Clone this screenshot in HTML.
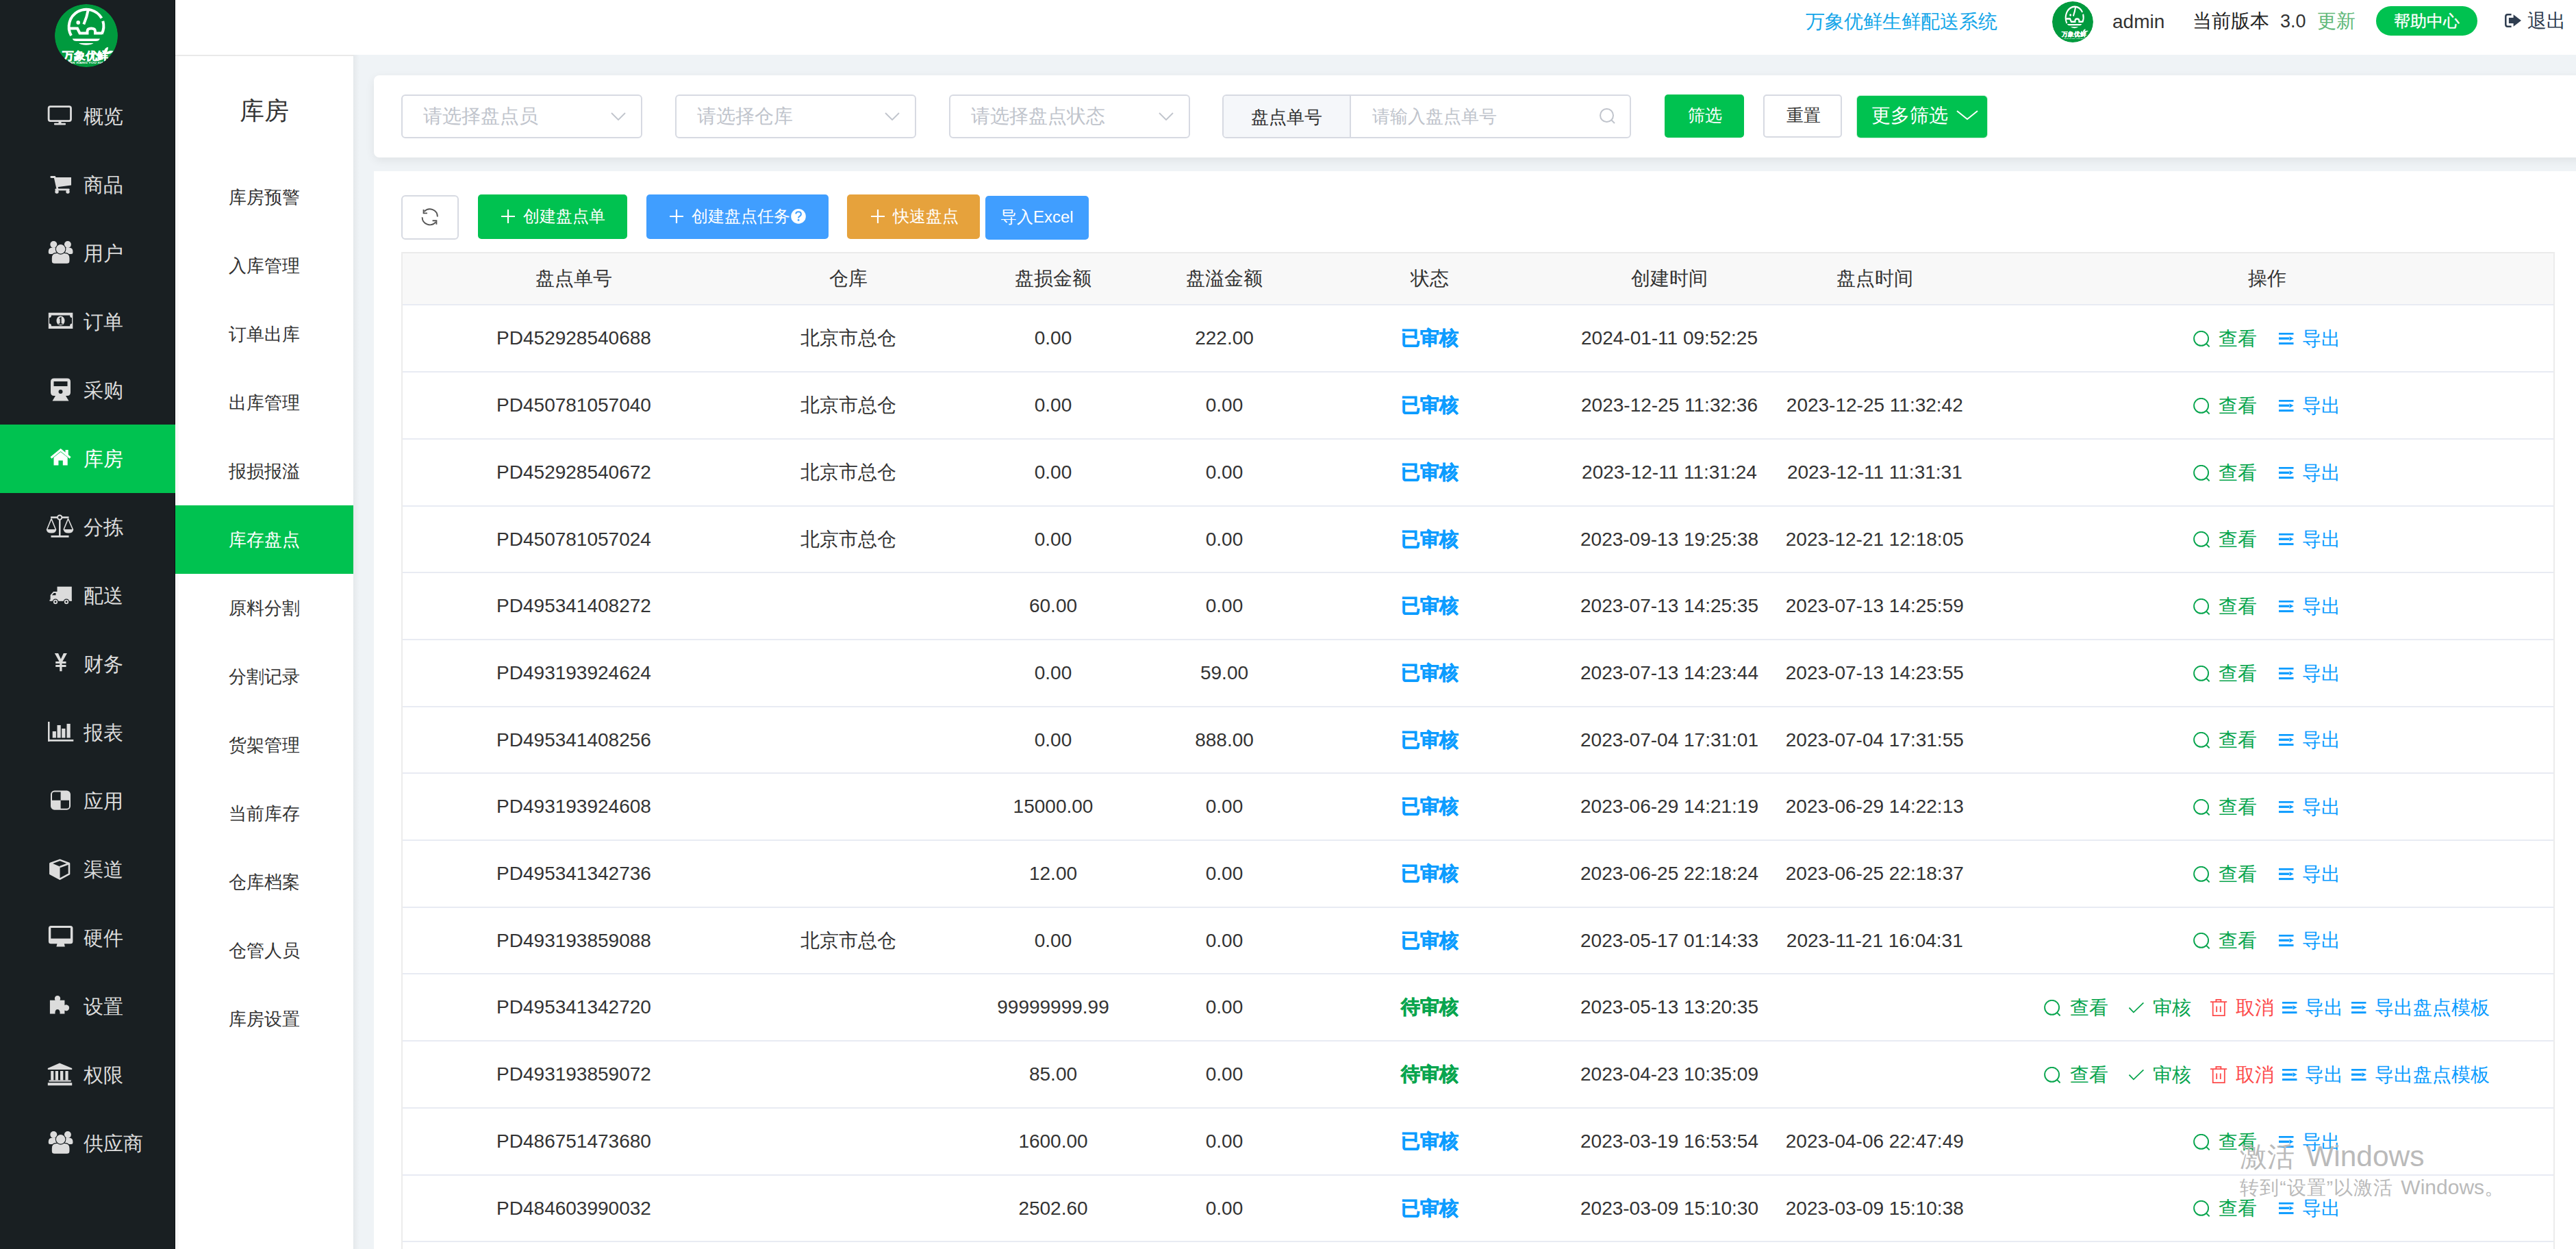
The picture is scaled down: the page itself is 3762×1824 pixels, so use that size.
<!DOCTYPE html>
<html><head><meta charset="utf-8">
<style>
*{box-sizing:border-box;margin:0;padding:0}
html,body{width:3762px;height:1824px;overflow:hidden;background:#eff3f6;font-family:"Liberation Sans",sans-serif;color:#333}
.t{position:absolute;white-space:nowrap;line-height:1}
#side{position:absolute;left:0;top:0;width:256px;height:1824px;background:#191f22;box-shadow:inset -1px 0 0 #0c1013}
.mi{position:absolute;left:0;width:256px;height:100px;color:#dcdcdc;font-size:29px}
.mi.act{background:#00c250;color:#fff}
.mt{position:absolute;left:122px;top:0;line-height:100px}
#header{position:absolute;left:256px;top:0;width:3506px;height:80px;background:#fff}
#subline{position:absolute;left:256px;top:80px;width:260px;height:2px;background:#e9e9e9}
#cshadow{position:absolute;left:516px;top:80px;width:9px;height:1744px;background:linear-gradient(to right,rgba(0,0,0,0.045),rgba(0,0,0,0))}
#sub{position:absolute;left:256px;top:82px;width:260px;height:1742px;background:#fff}
#subshadow{position:absolute;left:257px;top:82px;width:5px;height:1742px;background:linear-gradient(to right,#f5f5f5,#fff)}
#subtitle{position:absolute;left:256px;top:122px;width:260px;text-align:center;font-size:36px;color:#333;line-height:80px}
.si{position:absolute;left:256px;width:260px;height:100px;line-height:100px;text-align:center;font-size:26px;color:#333}
.si.act{background:#00c250;color:#fff}
#fcard{position:absolute;left:546px;top:110px;width:3300px;height:120px;background:#fff;border-radius:8px;box-shadow:0 4px 14px rgba(0,0,0,0.07)}
.sel{position:absolute;top:138px;height:64px;border:2px solid #d7dae2;border-radius:6px;background:#fff;font-size:28px;color:#c0c4cc;line-height:60px;padding-left:30px}
.sel svg{position:absolute;right:22px;top:24px}
#tcard{position:absolute;left:546px;top:250px;width:3216px;height:1600px;background:#fff}
.btn{position:absolute;top:284px;height:65px;border-radius:5px;color:#fff;font-size:24px;line-height:65px;text-align:center}
#table{position:absolute;left:586px;top:368px;width:3145px;height:1500px;border-left:2px solid #ececec;border-right:2px solid #ececec}
.thead{position:absolute;left:0;top:0;width:100%;height:78px;background:#f8f8f8;border-top:2px solid #ebebeb;border-bottom:2px solid #e8ebf3}
.tr{position:absolute;left:0;width:100%;height:97.7px;border-bottom:2px solid #e8ebf3}
.c{position:absolute;top:0;height:100%;display:flex;align-items:center;justify-content:center;font-size:28px;color:#333;white-space:nowrap}
.ok{color:#0c9cff;font-weight:bold;font-size:28px;-webkit-text-stroke:0.7px #0c9cff}
.wait{color:#08a54e;font-weight:bold;font-size:28px;-webkit-text-stroke:0.7px #08a54e}
.op{display:inline-flex;align-items:center;font-size:28px}
.op svg{position:relative;top:0.5px}

.g{color:#08a54e} .b{color:#0c9cff} .r{color:#fd4b4b}
</style></head><body>

<svg width="0" height="0" style="position:absolute">
<defs>
<clipPath id="lclip"><circle cx="46" cy="46" r="46"/></clipPath>
<g id="lg_ele">
<g fill="none" stroke="#fff" stroke-width="4" stroke-linecap="butt">
<path d="M24 46 A25.5 25.5 0 1 1 68.4 20.6"/>
<path d="M70.3 24.8 A25.5 25.5 0 0 1 68.6 43.6"/>
<path d="M49.2 6.5 Q47 19 42.3 29.5"/>
<path d="M22 35.5 L33 35.5 L36.5 42.4 L47.5 42.4 L47.5 40 Q47.5 35.6 53.3 35.6 Q59 35.6 59 40 L59 42.4 L69 42.4"/>
</g>
<circle cx="34.2" cy="26.9" r="2.8" fill="#fff"/>
</g>
<g id="lg_bars">
<path d="M25.8 50.4 L65.9 50.4 Q64.5 53.9 60 53.9 L31.5 53.9 Q27 53.9 25.8 50.4 Z" fill="#fff"/>
<path d="M35 57 L56.6 57 Q53 59.8 45.8 59.8 Q38.5 59.8 35 57 Z" fill="#fff"/>
</g>
<g id="lg_text">
<text x="11" y="80.5" font-family="Liberation Sans" font-weight="bold" font-size="15.5" fill="#fff" stroke="#fff" stroke-width="0.5" textLength="67" lengthAdjust="spacingAndGlyphs">万象优鲜</text>
<text x="17" y="87.4" font-family="Liberation Sans" font-weight="bold" font-size="3.6" fill="#fff" textLength="58" lengthAdjust="spacingAndGlyphs">WAN XIANG YOU XIAN</text>
</g>
<g id="lg_leaf">
<path d="M71.5 71 Q72 63.5 78 62.7 Q78 70 71.5 71 Z" fill="#fff"/>
<path d="M73 72.5 Q79 66.5 85.7 68.5 Q81 74.5 73 72.5 Z" fill="#fff"/>
</g>
<symbol id="logo" viewBox="0 0 92 92">
<g clip-path="url(#lclip)">
<circle cx="46" cy="46" r="46" fill="#009a3e"/>
<use href="#lg_ele"/><use href="#lg_bars"/><use href="#lg_text"/><use href="#lg_leaf"/>
</g>
</symbol>
<symbol id="avatar" viewBox="0 0 92 92">
<g clip-path="url(#lclip)">
<circle cx="46" cy="46" r="46" fill="#009a3e"/>
<use href="#lg_ele" transform="translate(14.05,4.3) scale(0.785,0.975)"/>
<use href="#lg_bars" transform="translate(12.5,0.2) scale(0.818,1)"/>
<use href="#lg_text" transform="translate(12.3,3.7) scale(0.827,0.93)"/>
<use href="#lg_leaf" transform="translate(8.3,18.1) scale(0.85,0.7)"/>
</g>
</symbol>
</defs>
</svg>
<div id="side">
<div class="mi" style="top:120px"><span class="mt">概览</span></div>
<div class="mi" style="top:220px"><span class="mt">商品</span></div>
<div class="mi" style="top:320px"><span class="mt">用户</span></div>
<div class="mi" style="top:420px"><span class="mt">订单</span></div>
<div class="mi" style="top:520px"><span class="mt">采购</span></div>
<div class="mi act" style="top:620px"><span class="mt">库房</span></div>
<div class="mi" style="top:720px"><span class="mt">分拣</span></div>
<div class="mi" style="top:820px"><span class="mt">配送</span></div>
<div class="mi" style="top:920px"><span class="mt">财务</span></div>
<div class="mi" style="top:1020px"><span class="mt">报表</span></div>
<div class="mi" style="top:1120px"><span class="mt">应用</span></div>
<div class="mi" style="top:1220px"><span class="mt">渠道</span></div>
<div class="mi" style="top:1320px"><span class="mt">硬件</span></div>
<div class="mi" style="top:1420px"><span class="mt">设置</span></div>
<div class="mi" style="top:1520px"><span class="mt">权限</span></div>
<div class="mi" style="top:1620px"><span class="mt">供应商</span></div>

<svg style="position:absolute;left:0;top:0" width="256" height="1824" viewBox="0 0 256 1824">
<g fill="#dcdcdc" stroke="none">
<!-- monitor outline -->
<rect x="71.1" y="155.6" width="32.4" height="21" rx="2.5" fill="none" stroke="#dcdcdc" stroke-width="2.8"/>
<rect x="85.5" y="177" width="4" height="3"/>
<rect x="79" y="179.7" width="17" height="2.8" rx="1"/>
<!-- cart -->
<g transform="translate(66,250)">
<rect x="7.4" y="7" width="7.8" height="3" rx="1.4"/>
<path d="M12.6 8.5 L15.4 8.5 L19.5 26.5 L16.6 26.5 Z"/>
<path d="M14.5 9 L38 9 L38 20.5 L17.5 23.2 Z"/>
<rect x="14.4" y="25.4" width="21.2" height="2.9" rx="1.2"/>
<circle cx="17" cy="30" r="2.7"/><circle cx="33" cy="30" r="2.7"/>
</g>
<!-- users -->
<g id="usersic">
<circle cx="78.3" cy="357.1" r="5"/><circle cx="98.9" cy="357.1" r="5"/>
<path d="M70.8 368.5 Q70.8 371 73.3 371 L84 371 L84 361.8 L76.5 361.8 Q70.8 361.8 70.8 367 Z"/>
<path d="M106.4 368.5 Q106.4 371 103.9 371 L93 371 L93 361.8 L100.7 361.8 Q106.4 361.8 106.4 367 Z"/>
<path d="M75.2 381 Q75.2 385.4 79.6 385.4 L97.6 385.4 Q102 385.4 102 381 L102 377 Q102 369.4 94.6 369.4 L82.6 369.4 Q75.2 369.4 75.2 377 Z" stroke="#191f22" stroke-width="1.1"/>
<circle cx="88.6" cy="363.8" r="7.3" stroke="#191f22" stroke-width="1.1"/>
</g>
<!-- money -->
<rect x="70.8" y="456.7" width="35.5" height="23.3"/>
<path fill="#191f22" d="M75 460.5 L102 460.5 Q102 464 105 464 L105 472.5 Q102 472.5 102 476.2 L75 476.2 Q75 472.5 72 472.5 L72 464 Q75 464 75 460.5 Z"/>
<ellipse cx="88.5" cy="468.4" rx="6" ry="6.8"/>
<path fill="#191f22" d="M86.8 464.2 L89.6 462.8 L89.6 472.4 L91.4 472.4 L91.4 474 L85.6 474 L85.6 472.4 L87.6 472.4 L87.6 465.4 L86.4 466 Z"/>
<!-- train -->
<path d="M79 552.5 L98 552.5 Q103 552.5 103 557.5 L103 573 Q103 578 98 578 L79 578 Q74 578 74 573 L74 557.5 Q74 552.5 79 552.5 Z"/>
<rect x="78.5" y="557" width="20" height="7" fill="#191f22"/>
<circle cx="88.5" cy="572" r="3" fill="#191f22"/>
<path d="M81 578 L96 578 L100.5 585.4 L76.5 585.4 Z"/>
<!-- balance -->
<rect x="74" y="754.3" width="26.5" height="2.6"/>
<circle cx="87.2" cy="755.6" r="3.2" fill="#191f22" stroke="#dcdcdc" stroke-width="2"/>
<rect x="86" y="758" width="2.5" height="24.5"/>
<rect x="74.5" y="782" width="26" height="2.8"/>
<path d="M75 757.5 L68.5 773.5 M75 757.5 L81.5 773.5 M99.5 757.5 L93 773.5 M99.5 757.5 L106.5 773.5" stroke="#dcdcdc" stroke-width="1.6" fill="none"/>
<path d="M67.7 773 L82.3 773 Q82 778.5 75 778.5 Q68 778.5 67.7 773 Z"/>
<path d="M92.6 773 L107.3 773 Q107 778.5 100 778.5 Q93 778.5 92.6 773 Z"/>
<!-- truck -->
<rect x="83.5" y="856.7" width="21.3" height="20.5"/>
<path d="M73.6 877 L73.6 869 L78 864 L84 864 L84 877 Z"/>
<path d="M75.8 869.2 L78.7 866 L81.5 866 L81.5 869.2 Z" fill="#191f22"/>
<rect x="72.5" y="875.8" width="32.3" height="2"/>
<circle cx="81" cy="879" r="3.8" stroke="#191f22" stroke-width="1.3"/><circle cx="81" cy="879" r="1.4" fill="#191f22"/>
<circle cx="97" cy="879" r="3.8" stroke="#191f22" stroke-width="1.3"/><circle cx="97" cy="879" r="1.4" fill="#191f22"/>
<!-- yen -->
<path d="M79.8 954 L85 954 L88.9 962.5 L92.8 954 L97.9 954 L91.3 966 L96.5 966 L96.5 969 L90.5 969 L90.5 971 L96.5 971 L96.5 974 L90.5 974 L90.5 980.2 L87.2 980.2 L87.2 974 L81.2 974 L81.2 971 L87.2 971 L87.2 969 L81.2 969 L81.2 966 L86.5 966 Z"/>
<!-- bar chart -->
<rect x="70" y="1054" width="2.5" height="28.7"/>
<rect x="70" y="1080" width="37.3" height="2.7"/>
<rect x="76.7" y="1068" width="5.2" height="9.5"/>
<rect x="83.5" y="1059" width="5.2" height="18.5"/>
<rect x="90.2" y="1064" width="5.2" height="13.5"/>
<rect x="97.5" y="1057" width="5.2" height="20.5"/>
<!-- quadrant -->
<rect x="75" y="1155.6" width="27" height="26.1" rx="4.5" fill="none" stroke="#dcdcdc" stroke-width="2"/>
<path d="M88.6 1156 L101 1156 Q101.5 1156 101.5 1160 L101.5 1168.8 L88.6 1168.8 Z"/>
<path d="M75.6 1168.8 L88.6 1168.8 L88.6 1181.2 L79 1181.2 Q75.6 1181.2 75.6 1178 Z"/>
<!-- cube -->
<path d="M72.2 1260.5 L87.5 1267 L87.5 1284.8 L72.2 1276.5 Z"/>
<path d="M87.5 1255.9 L101 1261 L101 1276.3 L87.5 1283.6 L73.5 1276 L73.5 1261 Z M87.5 1266 L101 1261" fill="none" stroke="#dcdcdc" stroke-width="2.6" stroke-linejoin="round"/>
<path d="M73.5 1261 L87.5 1267" stroke="#dcdcdc" stroke-width="2.6"/>
<!-- desktop -->
<rect x="70.9" y="1352" width="35.5" height="26.3" rx="3.5"/>
<rect x="74.3" y="1355" width="28.6" height="15.6" fill="#191f22"/>
<path d="M83.5 1378 L93.8 1378 L94.8 1382.4 L82.4 1382.4 Z"/>
<!-- puzzle -->
<path d="M72.9 1460.8 L80.5 1460.8 Q79.5 1458.5 80 1457 A4.2 4.2 0 0 1 88 1457 Q88.5 1458.5 87.5 1460.8 L94.4 1460.8 L94.4 1468 Q96 1467 97.8 1467.4 A4.6 4.6 0 0 1 97.8 1476.2 Q96 1476.6 94.4 1475.5 L94.4 1480.6 L87.5 1480.6 Q88 1478.5 87 1476 A3.2 3.2 0 0 0 81 1476 Q80 1478.5 80.5 1480.6 L72.9 1480.6 Z"/>
<!-- bank -->
<path d="M87 1552.5 L105.2 1560 L105.2 1562 L69.8 1562 L69.8 1560 Z"/>
<rect x="74.2" y="1564" width="4.1" height="13.5"/><rect x="80.8" y="1564" width="4.2" height="13.5"/>
<rect x="88" y="1564" width="4.3" height="13.5"/><rect x="95.4" y="1564" width="4.2" height="13.5"/>
<rect x="71.5" y="1577.5" width="32.2" height="2.1"/>
<rect x="69.8" y="1581.2" width="35.4" height="4"/>
<!-- users 2 -->
<use href="#usersic" transform="translate(0,1300)"/>
</g>
<!-- home (white) -->
<g fill="#ffffff">
<path d="M74.5 668.5 L88.6 657 L102.6 668.5" fill="none" stroke="#fff" stroke-width="3"/>
<rect x="95.5" y="657" width="4.2" height="8"/>
<path d="M78.5 668 L88.6 660 L98.7 668 L98.7 679.6 L91.8 679.6 L91.8 672.5 L85.4 672.5 L85.4 679.6 L78.5 679.6 Z"/>
</g>
</svg>
<svg style="position:absolute;left:80px;top:6px" width="92" height="92"><use href="#logo"/></svg>
</div>
<div id="header"></div><div id="subline"></div><div id="cshadow"></div>
<div class="t" style="left:2637px;top:18px;font-size:28px;color:#14a6e9">万象优鲜生鲜配送系统</div>
<svg style="position:absolute;left:2997px;top:1.5px" width="60" height="60" viewBox="0 0 92 92"><use href="#avatar"/></svg>
<div class="t" style="left:3085px;top:18px;font-size:28px;color:#333">admin</div>
<div class="t" style="left:3202px;top:17px;font-size:28px;color:#222">当前版本</div>
<div class="t" style="left:3330px;top:18px;font-size:27px;color:#333">3.0</div>
<div class="t" style="left:3384px;top:17px;font-size:28px;color:#5fb878">更新</div>
<div style="position:absolute;left:3470px;top:9px;width:148px;height:43px;border-radius:22px;background:#00c250"></div>
<div class="t" style="left:3496px;top:19px;font-size:24px;color:#fff;-webkit-text-stroke:0.3px #fff">帮助中心</div>
<svg style="position:absolute;left:3658px;top:20px" width="25" height="20" viewBox="0 0 25 20"><path d="M9.6 1.3 L4.2 1.3 Q1.3 1.3 1.3 4.3 L1.3 15.7 Q1.3 18.7 4.2 18.7 L9.6 18.7" fill="none" stroke="#2f3d50" stroke-width="2.5"/><rect x="5.9" y="5.9" width="7.4" height="8.2" fill="#2f3d50"/><path d="M12.6 1.2 L24 10 L12.6 18.8 Z" fill="#2f3d50"/></svg>
<div class="t" style="left:3691px;top:17px;font-size:28px;color:#2f3d50">退出</div>
<div id="sub"></div><div id="subshadow"></div>
<div id="subtitle">库房</div>
<div class="si" style="top:238px">库房预警</div>
<div class="si" style="top:338px">入库管理</div>
<div class="si" style="top:438px">订单出库</div>
<div class="si" style="top:538px">出库管理</div>
<div class="si" style="top:638px">报损报溢</div>
<div class="si act" style="top:738px">库存盘点</div>
<div class="si" style="top:838px">原料分割</div>
<div class="si" style="top:938px">分割记录</div>
<div class="si" style="top:1038px">货架管理</div>
<div class="si" style="top:1138px">当前库存</div>
<div class="si" style="top:1238px">仓库档案</div>
<div class="si" style="top:1338px">仓管人员</div>
<div class="si" style="top:1438px">库房设置</div>
<div id="fcard"></div>
<div class="sel" style="left:586px;width:352px">请选择盘点员<svg width="22" height="12" viewBox="0 0 22 12"><path d="M1 1 L11 11 L21 1" fill="none" stroke="#c0c4cc" stroke-width="1.8"/></svg></div>
<div class="sel" style="left:986px;width:352px">请选择仓库<svg width="22" height="12" viewBox="0 0 22 12"><path d="M1 1 L11 11 L21 1" fill="none" stroke="#c0c4cc" stroke-width="1.8"/></svg></div>
<div class="sel" style="left:1386px;width:352px">请选择盘点状态<svg width="22" height="12" viewBox="0 0 22 12"><path d="M1 1 L11 11 L21 1" fill="none" stroke="#c0c4cc" stroke-width="1.8"/></svg></div>
<div style="position:absolute;left:1785px;top:138px;width:597px;height:64px;border:2px solid #d7dae2;border-radius:6px;background:#fff;overflow:hidden">
 <div style="position:absolute;left:0;top:0;width:186px;height:60px;background:#f5f7fa;border-right:2px solid #d7dae2"></div>
</div>
<div class="t" style="left:1827px;top:158px;font-size:26px;color:#333">盘点单号</div>
<div class="t" style="left:2004px;top:157px;font-size:26px;color:#c0c4cc">请输入盘点单号</div>
<svg style="position:absolute;left:2335px;top:157px" width="25" height="25" viewBox="0 0 25 25"><circle cx="11.5" cy="11.5" r="9.5" fill="none" stroke="#c0c4cc" stroke-width="2"/><path d="M18.5 18.5 L23 23" stroke="#c0c4cc" stroke-width="2"/></svg>
<div style="position:absolute;left:2431px;top:138px;width:116px;height:63px;border-radius:5px;background:#00c250"></div>
<div class="t" style="left:2465px;top:157px;font-size:24.5px;color:#fff">筛选</div>
<div style="position:absolute;left:2575px;top:138px;width:115px;height:63px;border-radius:5px;background:#fff;border:2px solid #d7dae2"></div>
<div class="t" style="left:2609px;top:157px;font-size:24.5px;color:#333">重置</div>
<div style="position:absolute;left:2712px;top:139.5px;width:190px;height:61px;border-radius:5px;background:#00c250;box-shadow:0 0 0 1px #c8f0d6"></div>
<div class="t" style="left:2733px;top:155px;font-size:28px;color:#fff">更多筛选</div>
<svg style="position:absolute;left:2856px;top:160px" width="34" height="16" viewBox="0 0 34 16"><path d="M2 2 L17 14 L32 2" fill="none" stroke="#fff" stroke-width="2"/></svg>
<div id="tcard"></div>
<div style="position:absolute;left:586px;top:285px;width:84px;height:65px;border:2px solid #d7dae2;border-radius:6px;background:#fff"></div>
<svg style="position:absolute;left:608px;top:298px" width="40" height="38" viewBox="0 0 40 38"><g fill="none" stroke="#555" stroke-width="1.9"><path d="M11.6 10.8 A11.2 11.2 0 0 1 30.9 18.4"/><path d="M10.6 8 L10.6 13.4 L16 13.4"/><path d="M8.6 19.2 A11.2 11.2 0 0 0 28.4 26.2"/><path d="M23.6 24.3 L29.4 24.3 L29.4 29.7"/></g></svg>
<div class="btn" style="left:698px;width:218px;background:#00c250"></div>
<div class="btn" style="left:944px;width:266px;background:#409eff"></div>
<div class="btn" style="left:1237px;width:194px;background:#e6a23c"></div>
<div class="btn" style="left:1439px;width:151px;background:#409eff;top:286px;height:64px"></div>
<svg style="position:absolute;left:732px;top:306px" width="20" height="20"><path d="M10 0V20M0 10H20" stroke="#fff" stroke-width="2.2"/></svg>
<div class="t" style="left:764px;top:304px;font-size:24px;color:#fff">创建盘点单</div>
<svg style="position:absolute;left:978px;top:306px" width="20" height="20"><path d="M10 0V20M0 10H20" stroke="#fff" stroke-width="2.2"/></svg>
<div class="t" style="left:1010px;top:304px;font-size:24px;color:#fff">创建盘点任务</div>
<svg style="position:absolute;left:1154.5px;top:305px" width="22" height="22" viewBox="0 0 22 22"><circle cx="11" cy="10.9" r="10.8" fill="#fff"/><path d="M7.2 7.4 Q7.6 4.2 11 4.2 Q14.9 4.2 14.9 7.7 Q14.9 9.9 12.6 11 Q11.1 11.8 11.1 13.4" fill="none" stroke="#409eff" stroke-width="2.1"/><circle cx="11.1" cy="16.4" r="1.4" fill="#409eff"/></svg>
<svg style="position:absolute;left:1272px;top:306px" width="20" height="20"><path d="M10 0V20M0 10H20" stroke="#fff" stroke-width="2.2"/></svg>
<div class="t" style="left:1304px;top:304px;font-size:24px;color:#fff">快速盘点</div>
<div class="t" style="left:1461px;top:305px;font-size:24px;color:#fff">导入Excel</div>
<div id="table">
<div class="thead"><div class="c " style="left:110.00px;width:280px">盘点单号</div><div class="c " style="left:510.50px;width:280px">仓库</div><div class="c " style="left:810.00px;width:280px">盘损金额</div><div class="c " style="left:1060.00px;width:280px">盘溢金额</div><div class="c " style="left:1360.00px;width:280px">状态</div><div class="c " style="left:1710.00px;width:280px">创建时间</div><div class="c " style="left:2009.80px;width:280px">盘点时间</div><div class="c " style="left:2422.50px;width:600px">操作</div></div>
<div class="tr" style="top:78px;height:98px"><div class="c " style="left:110.00px;width:280px">PD452928540688</div><div class="c " style="left:510.50px;width:280px">北京市总仓</div><div class="c " style="left:810.00px;width:280px">0.00</div><div class="c " style="left:1060.00px;width:280px">222.00</div><div class="c " style="left:1360.00px;width:280px"><b class="ok">已审核</b></div><div class="c " style="left:1710.00px;width:280px">2024-01-11 09:52:25</div><div class="c " style="left:2009.80px;width:280px"></div><div class="c opsc" style="left:2422.50px;width:600px"><span class="op g" style="margin-right:31.7px"><svg width="24" height="24" viewBox="0 0 24 24"><circle cx="11.6" cy="11.3" r="10.5" fill="none" stroke="currentColor" stroke-width="1.9"/><path d="M18.6 18.4 L23.7 23.4" stroke="currentColor" stroke-width="1.9"/></svg><span style="margin-left:13px;position:relative;top:0.5px">查看</span></span><span class="op b" style="margin-right:0px"><svg width="22" height="18" viewBox="0 0 22 18"><rect x="0" y="0" width="21.5" height="2.7" fill="currentColor"/><rect x="0" y="6.6" width="15" height="3.3" fill="currentColor"/><path d="M15.5 5.2 L21.5 8.3 L15.5 11.5 Z" fill="currentColor"/><rect x="0" y="14.1" width="21.5" height="3" fill="currentColor"/></svg><span style="margin-left:11.5px;position:relative;top:0.5px">导出</span></span></div></div>
<div class="tr" style="top:176px;height:98px"><div class="c " style="left:110.00px;width:280px">PD450781057040</div><div class="c " style="left:510.50px;width:280px">北京市总仓</div><div class="c " style="left:810.00px;width:280px">0.00</div><div class="c " style="left:1060.00px;width:280px">0.00</div><div class="c " style="left:1360.00px;width:280px"><b class="ok">已审核</b></div><div class="c " style="left:1710.00px;width:280px">2023-12-25 11:32:36</div><div class="c " style="left:2009.80px;width:280px">2023-12-25 11:32:42</div><div class="c opsc" style="left:2422.50px;width:600px"><span class="op g" style="margin-right:31.7px"><svg width="24" height="24" viewBox="0 0 24 24"><circle cx="11.6" cy="11.3" r="10.5" fill="none" stroke="currentColor" stroke-width="1.9"/><path d="M18.6 18.4 L23.7 23.4" stroke="currentColor" stroke-width="1.9"/></svg><span style="margin-left:13px;position:relative;top:0.5px">查看</span></span><span class="op b" style="margin-right:0px"><svg width="22" height="18" viewBox="0 0 22 18"><rect x="0" y="0" width="21.5" height="2.7" fill="currentColor"/><rect x="0" y="6.6" width="15" height="3.3" fill="currentColor"/><path d="M15.5 5.2 L21.5 8.3 L15.5 11.5 Z" fill="currentColor"/><rect x="0" y="14.1" width="21.5" height="3" fill="currentColor"/></svg><span style="margin-left:11.5px;position:relative;top:0.5px">导出</span></span></div></div>
<div class="tr" style="top:274px;height:98px"><div class="c " style="left:110.00px;width:280px">PD452928540672</div><div class="c " style="left:510.50px;width:280px">北京市总仓</div><div class="c " style="left:810.00px;width:280px">0.00</div><div class="c " style="left:1060.00px;width:280px">0.00</div><div class="c " style="left:1360.00px;width:280px"><b class="ok">已审核</b></div><div class="c " style="left:1710.00px;width:280px">2023-12-11 11:31:24</div><div class="c " style="left:2009.80px;width:280px">2023-12-11 11:31:31</div><div class="c opsc" style="left:2422.50px;width:600px"><span class="op g" style="margin-right:31.7px"><svg width="24" height="24" viewBox="0 0 24 24"><circle cx="11.6" cy="11.3" r="10.5" fill="none" stroke="currentColor" stroke-width="1.9"/><path d="M18.6 18.4 L23.7 23.4" stroke="currentColor" stroke-width="1.9"/></svg><span style="margin-left:13px;position:relative;top:0.5px">查看</span></span><span class="op b" style="margin-right:0px"><svg width="22" height="18" viewBox="0 0 22 18"><rect x="0" y="0" width="21.5" height="2.7" fill="currentColor"/><rect x="0" y="6.6" width="15" height="3.3" fill="currentColor"/><path d="M15.5 5.2 L21.5 8.3 L15.5 11.5 Z" fill="currentColor"/><rect x="0" y="14.1" width="21.5" height="3" fill="currentColor"/></svg><span style="margin-left:11.5px;position:relative;top:0.5px">导出</span></span></div></div>
<div class="tr" style="top:372px;height:97px"><div class="c " style="left:110.00px;width:280px">PD450781057024</div><div class="c " style="left:510.50px;width:280px">北京市总仓</div><div class="c " style="left:810.00px;width:280px">0.00</div><div class="c " style="left:1060.00px;width:280px">0.00</div><div class="c " style="left:1360.00px;width:280px"><b class="ok">已审核</b></div><div class="c " style="left:1710.00px;width:280px">2023-09-13 19:25:38</div><div class="c " style="left:2009.80px;width:280px">2023-12-21 12:18:05</div><div class="c opsc" style="left:2422.50px;width:600px"><span class="op g" style="margin-right:31.7px"><svg width="24" height="24" viewBox="0 0 24 24"><circle cx="11.6" cy="11.3" r="10.5" fill="none" stroke="currentColor" stroke-width="1.9"/><path d="M18.6 18.4 L23.7 23.4" stroke="currentColor" stroke-width="1.9"/></svg><span style="margin-left:13px;position:relative;top:0.5px">查看</span></span><span class="op b" style="margin-right:0px"><svg width="22" height="18" viewBox="0 0 22 18"><rect x="0" y="0" width="21.5" height="2.7" fill="currentColor"/><rect x="0" y="6.6" width="15" height="3.3" fill="currentColor"/><path d="M15.5 5.2 L21.5 8.3 L15.5 11.5 Z" fill="currentColor"/><rect x="0" y="14.1" width="21.5" height="3" fill="currentColor"/></svg><span style="margin-left:11.5px;position:relative;top:0.5px">导出</span></span></div></div>
<div class="tr" style="top:469px;height:98px"><div class="c " style="left:110.00px;width:280px">PD495341408272</div><div class="c " style="left:510.50px;width:280px"></div><div class="c " style="left:810.00px;width:280px">60.00</div><div class="c " style="left:1060.00px;width:280px">0.00</div><div class="c " style="left:1360.00px;width:280px"><b class="ok">已审核</b></div><div class="c " style="left:1710.00px;width:280px">2023-07-13 14:25:35</div><div class="c " style="left:2009.80px;width:280px">2023-07-13 14:25:59</div><div class="c opsc" style="left:2422.50px;width:600px"><span class="op g" style="margin-right:31.7px"><svg width="24" height="24" viewBox="0 0 24 24"><circle cx="11.6" cy="11.3" r="10.5" fill="none" stroke="currentColor" stroke-width="1.9"/><path d="M18.6 18.4 L23.7 23.4" stroke="currentColor" stroke-width="1.9"/></svg><span style="margin-left:13px;position:relative;top:0.5px">查看</span></span><span class="op b" style="margin-right:0px"><svg width="22" height="18" viewBox="0 0 22 18"><rect x="0" y="0" width="21.5" height="2.7" fill="currentColor"/><rect x="0" y="6.6" width="15" height="3.3" fill="currentColor"/><path d="M15.5 5.2 L21.5 8.3 L15.5 11.5 Z" fill="currentColor"/><rect x="0" y="14.1" width="21.5" height="3" fill="currentColor"/></svg><span style="margin-left:11.5px;position:relative;top:0.5px">导出</span></span></div></div>
<div class="tr" style="top:567px;height:98px"><div class="c " style="left:110.00px;width:280px">PD493193924624</div><div class="c " style="left:510.50px;width:280px"></div><div class="c " style="left:810.00px;width:280px">0.00</div><div class="c " style="left:1060.00px;width:280px">59.00</div><div class="c " style="left:1360.00px;width:280px"><b class="ok">已审核</b></div><div class="c " style="left:1710.00px;width:280px">2023-07-13 14:23:44</div><div class="c " style="left:2009.80px;width:280px">2023-07-13 14:23:55</div><div class="c opsc" style="left:2422.50px;width:600px"><span class="op g" style="margin-right:31.7px"><svg width="24" height="24" viewBox="0 0 24 24"><circle cx="11.6" cy="11.3" r="10.5" fill="none" stroke="currentColor" stroke-width="1.9"/><path d="M18.6 18.4 L23.7 23.4" stroke="currentColor" stroke-width="1.9"/></svg><span style="margin-left:13px;position:relative;top:0.5px">查看</span></span><span class="op b" style="margin-right:0px"><svg width="22" height="18" viewBox="0 0 22 18"><rect x="0" y="0" width="21.5" height="2.7" fill="currentColor"/><rect x="0" y="6.6" width="15" height="3.3" fill="currentColor"/><path d="M15.5 5.2 L21.5 8.3 L15.5 11.5 Z" fill="currentColor"/><rect x="0" y="14.1" width="21.5" height="3" fill="currentColor"/></svg><span style="margin-left:11.5px;position:relative;top:0.5px">导出</span></span></div></div>
<div class="tr" style="top:665px;height:97px"><div class="c " style="left:110.00px;width:280px">PD495341408256</div><div class="c " style="left:510.50px;width:280px"></div><div class="c " style="left:810.00px;width:280px">0.00</div><div class="c " style="left:1060.00px;width:280px">888.00</div><div class="c " style="left:1360.00px;width:280px"><b class="ok">已审核</b></div><div class="c " style="left:1710.00px;width:280px">2023-07-04 17:31:01</div><div class="c " style="left:2009.80px;width:280px">2023-07-04 17:31:55</div><div class="c opsc" style="left:2422.50px;width:600px"><span class="op g" style="margin-right:31.7px"><svg width="24" height="24" viewBox="0 0 24 24"><circle cx="11.6" cy="11.3" r="10.5" fill="none" stroke="currentColor" stroke-width="1.9"/><path d="M18.6 18.4 L23.7 23.4" stroke="currentColor" stroke-width="1.9"/></svg><span style="margin-left:13px;position:relative;top:0.5px">查看</span></span><span class="op b" style="margin-right:0px"><svg width="22" height="18" viewBox="0 0 22 18"><rect x="0" y="0" width="21.5" height="2.7" fill="currentColor"/><rect x="0" y="6.6" width="15" height="3.3" fill="currentColor"/><path d="M15.5 5.2 L21.5 8.3 L15.5 11.5 Z" fill="currentColor"/><rect x="0" y="14.1" width="21.5" height="3" fill="currentColor"/></svg><span style="margin-left:11.5px;position:relative;top:0.5px">导出</span></span></div></div>
<div class="tr" style="top:762px;height:98px"><div class="c " style="left:110.00px;width:280px">PD493193924608</div><div class="c " style="left:510.50px;width:280px"></div><div class="c " style="left:810.00px;width:280px">15000.00</div><div class="c " style="left:1060.00px;width:280px">0.00</div><div class="c " style="left:1360.00px;width:280px"><b class="ok">已审核</b></div><div class="c " style="left:1710.00px;width:280px">2023-06-29 14:21:19</div><div class="c " style="left:2009.80px;width:280px">2023-06-29 14:22:13</div><div class="c opsc" style="left:2422.50px;width:600px"><span class="op g" style="margin-right:31.7px"><svg width="24" height="24" viewBox="0 0 24 24"><circle cx="11.6" cy="11.3" r="10.5" fill="none" stroke="currentColor" stroke-width="1.9"/><path d="M18.6 18.4 L23.7 23.4" stroke="currentColor" stroke-width="1.9"/></svg><span style="margin-left:13px;position:relative;top:0.5px">查看</span></span><span class="op b" style="margin-right:0px"><svg width="22" height="18" viewBox="0 0 22 18"><rect x="0" y="0" width="21.5" height="2.7" fill="currentColor"/><rect x="0" y="6.6" width="15" height="3.3" fill="currentColor"/><path d="M15.5 5.2 L21.5 8.3 L15.5 11.5 Z" fill="currentColor"/><rect x="0" y="14.1" width="21.5" height="3" fill="currentColor"/></svg><span style="margin-left:11.5px;position:relative;top:0.5px">导出</span></span></div></div>
<div class="tr" style="top:860px;height:98px"><div class="c " style="left:110.00px;width:280px">PD495341342736</div><div class="c " style="left:510.50px;width:280px"></div><div class="c " style="left:810.00px;width:280px">12.00</div><div class="c " style="left:1060.00px;width:280px">0.00</div><div class="c " style="left:1360.00px;width:280px"><b class="ok">已审核</b></div><div class="c " style="left:1710.00px;width:280px">2023-06-25 22:18:24</div><div class="c " style="left:2009.80px;width:280px">2023-06-25 22:18:37</div><div class="c opsc" style="left:2422.50px;width:600px"><span class="op g" style="margin-right:31.7px"><svg width="24" height="24" viewBox="0 0 24 24"><circle cx="11.6" cy="11.3" r="10.5" fill="none" stroke="currentColor" stroke-width="1.9"/><path d="M18.6 18.4 L23.7 23.4" stroke="currentColor" stroke-width="1.9"/></svg><span style="margin-left:13px;position:relative;top:0.5px">查看</span></span><span class="op b" style="margin-right:0px"><svg width="22" height="18" viewBox="0 0 22 18"><rect x="0" y="0" width="21.5" height="2.7" fill="currentColor"/><rect x="0" y="6.6" width="15" height="3.3" fill="currentColor"/><path d="M15.5 5.2 L21.5 8.3 L15.5 11.5 Z" fill="currentColor"/><rect x="0" y="14.1" width="21.5" height="3" fill="currentColor"/></svg><span style="margin-left:11.5px;position:relative;top:0.5px">导出</span></span></div></div>
<div class="tr" style="top:958px;height:97px"><div class="c " style="left:110.00px;width:280px">PD493193859088</div><div class="c " style="left:510.50px;width:280px">北京市总仓</div><div class="c " style="left:810.00px;width:280px">0.00</div><div class="c " style="left:1060.00px;width:280px">0.00</div><div class="c " style="left:1360.00px;width:280px"><b class="ok">已审核</b></div><div class="c " style="left:1710.00px;width:280px">2023-05-17 01:14:33</div><div class="c " style="left:2009.80px;width:280px">2023-11-21 16:04:31</div><div class="c opsc" style="left:2422.50px;width:600px"><span class="op g" style="margin-right:31.7px"><svg width="24" height="24" viewBox="0 0 24 24"><circle cx="11.6" cy="11.3" r="10.5" fill="none" stroke="currentColor" stroke-width="1.9"/><path d="M18.6 18.4 L23.7 23.4" stroke="currentColor" stroke-width="1.9"/></svg><span style="margin-left:13px;position:relative;top:0.5px">查看</span></span><span class="op b" style="margin-right:0px"><svg width="22" height="18" viewBox="0 0 22 18"><rect x="0" y="0" width="21.5" height="2.7" fill="currentColor"/><rect x="0" y="6.6" width="15" height="3.3" fill="currentColor"/><path d="M15.5 5.2 L21.5 8.3 L15.5 11.5 Z" fill="currentColor"/><rect x="0" y="14.1" width="21.5" height="3" fill="currentColor"/></svg><span style="margin-left:11.5px;position:relative;top:0.5px">导出</span></span></div></div>
<div class="tr" style="top:1055px;height:98px"><div class="c " style="left:110.00px;width:280px">PD495341342720</div><div class="c " style="left:510.50px;width:280px"></div><div class="c " style="left:810.00px;width:280px">99999999.99</div><div class="c " style="left:1060.00px;width:280px">0.00</div><div class="c " style="left:1360.00px;width:280px"><b class="wait">待审核</b></div><div class="c " style="left:1710.00px;width:280px">2023-05-13 13:20:35</div><div class="c " style="left:2009.80px;width:280px"></div><div class="c opsc" style="left:2422.50px;width:600px"><span class="op g" style="margin-right:30.4px"><svg width="24" height="24" viewBox="0 0 24 24"><circle cx="11.6" cy="11.3" r="10.5" fill="none" stroke="currentColor" stroke-width="1.9"/><path d="M18.6 18.4 L23.7 23.4" stroke="currentColor" stroke-width="1.9"/></svg><span style="margin-left:13.5px;position:relative;top:0.5px">查看</span></span><span class="op g" style="margin-right:28.4px"><svg width="22" height="16" viewBox="0 0 22 16"><path d="M0.5 7.6 L6.9 14.3 L21.4 0.4" fill="none" stroke="currentColor" stroke-width="1.8"/></svg><span style="margin-left:13px;position:relative;top:0.5px">审核</span></span><span class="op r" style="margin-right:11.5px"><svg width="25" height="26" viewBox="0 0 25 26"><path d="M0 4.2 H24.2 M8.4 4.2 V0.9 H15.4 V4.2 M3.7 4.2 V24.2 H20.8 V4.2 M9.2 10.5 V18.9 M14.8 10.5 V18.9" fill="none" stroke="currentColor" stroke-width="1.8"/></svg><span style="margin-left:12px;position:relative;top:0.5px">取消</span></span><span class="op b" style="margin-right:12px"><svg width="22" height="18" viewBox="0 0 22 18"><rect x="0" y="0" width="21.5" height="2.7" fill="currentColor"/><rect x="0" y="6.6" width="15" height="3.3" fill="currentColor"/><path d="M15.5 5.2 L21.5 8.3 L15.5 11.5 Z" fill="currentColor"/><rect x="0" y="14.1" width="21.5" height="3" fill="currentColor"/></svg><span style="margin-left:11.5px;position:relative;top:0.5px">导出</span></span><span class="op b" style="margin-right:0px"><svg width="22" height="18" viewBox="0 0 22 18"><rect x="0" y="0" width="21.5" height="2.7" fill="currentColor"/><rect x="0" y="6.6" width="15" height="3.3" fill="currentColor"/><path d="M15.5 5.2 L21.5 8.3 L15.5 11.5 Z" fill="currentColor"/><rect x="0" y="14.1" width="21.5" height="3" fill="currentColor"/></svg><span style="margin-left:11.5px;position:relative;top:0.5px">导出盘点模板</span></span></div></div>
<div class="tr" style="top:1153px;height:98px"><div class="c " style="left:110.00px;width:280px">PD493193859072</div><div class="c " style="left:510.50px;width:280px"></div><div class="c " style="left:810.00px;width:280px">85.00</div><div class="c " style="left:1060.00px;width:280px">0.00</div><div class="c " style="left:1360.00px;width:280px"><b class="wait">待审核</b></div><div class="c " style="left:1710.00px;width:280px">2023-04-23 10:35:09</div><div class="c " style="left:2009.80px;width:280px"></div><div class="c opsc" style="left:2422.50px;width:600px"><span class="op g" style="margin-right:30.4px"><svg width="24" height="24" viewBox="0 0 24 24"><circle cx="11.6" cy="11.3" r="10.5" fill="none" stroke="currentColor" stroke-width="1.9"/><path d="M18.6 18.4 L23.7 23.4" stroke="currentColor" stroke-width="1.9"/></svg><span style="margin-left:13.5px;position:relative;top:0.5px">查看</span></span><span class="op g" style="margin-right:28.4px"><svg width="22" height="16" viewBox="0 0 22 16"><path d="M0.5 7.6 L6.9 14.3 L21.4 0.4" fill="none" stroke="currentColor" stroke-width="1.8"/></svg><span style="margin-left:13px;position:relative;top:0.5px">审核</span></span><span class="op r" style="margin-right:11.5px"><svg width="25" height="26" viewBox="0 0 25 26"><path d="M0 4.2 H24.2 M8.4 4.2 V0.9 H15.4 V4.2 M3.7 4.2 V24.2 H20.8 V4.2 M9.2 10.5 V18.9 M14.8 10.5 V18.9" fill="none" stroke="currentColor" stroke-width="1.8"/></svg><span style="margin-left:12px;position:relative;top:0.5px">取消</span></span><span class="op b" style="margin-right:12px"><svg width="22" height="18" viewBox="0 0 22 18"><rect x="0" y="0" width="21.5" height="2.7" fill="currentColor"/><rect x="0" y="6.6" width="15" height="3.3" fill="currentColor"/><path d="M15.5 5.2 L21.5 8.3 L15.5 11.5 Z" fill="currentColor"/><rect x="0" y="14.1" width="21.5" height="3" fill="currentColor"/></svg><span style="margin-left:11.5px;position:relative;top:0.5px">导出</span></span><span class="op b" style="margin-right:0px"><svg width="22" height="18" viewBox="0 0 22 18"><rect x="0" y="0" width="21.5" height="2.7" fill="currentColor"/><rect x="0" y="6.6" width="15" height="3.3" fill="currentColor"/><path d="M15.5 5.2 L21.5 8.3 L15.5 11.5 Z" fill="currentColor"/><rect x="0" y="14.1" width="21.5" height="3" fill="currentColor"/></svg><span style="margin-left:11.5px;position:relative;top:0.5px">导出盘点模板</span></span></div></div>
<div class="tr" style="top:1251px;height:98px"><div class="c " style="left:110.00px;width:280px">PD486751473680</div><div class="c " style="left:510.50px;width:280px"></div><div class="c " style="left:810.00px;width:280px">1600.00</div><div class="c " style="left:1060.00px;width:280px">0.00</div><div class="c " style="left:1360.00px;width:280px"><b class="ok">已审核</b></div><div class="c " style="left:1710.00px;width:280px">2023-03-19 16:53:54</div><div class="c " style="left:2009.80px;width:280px">2023-04-06 22:47:49</div><div class="c opsc" style="left:2422.50px;width:600px"><span class="op g" style="margin-right:31.7px"><svg width="24" height="24" viewBox="0 0 24 24"><circle cx="11.6" cy="11.3" r="10.5" fill="none" stroke="currentColor" stroke-width="1.9"/><path d="M18.6 18.4 L23.7 23.4" stroke="currentColor" stroke-width="1.9"/></svg><span style="margin-left:13px;position:relative;top:0.5px">查看</span></span><span class="op b" style="margin-right:0px"><svg width="22" height="18" viewBox="0 0 22 18"><rect x="0" y="0" width="21.5" height="2.7" fill="currentColor"/><rect x="0" y="6.6" width="15" height="3.3" fill="currentColor"/><path d="M15.5 5.2 L21.5 8.3 L15.5 11.5 Z" fill="currentColor"/><rect x="0" y="14.1" width="21.5" height="3" fill="currentColor"/></svg><span style="margin-left:11.5px;position:relative;top:0.5px">导出</span></span></div></div>
<div class="tr" style="top:1349px;height:97px"><div class="c " style="left:110.00px;width:280px">PD484603990032</div><div class="c " style="left:510.50px;width:280px"></div><div class="c " style="left:810.00px;width:280px">2502.60</div><div class="c " style="left:1060.00px;width:280px">0.00</div><div class="c " style="left:1360.00px;width:280px"><b class="ok">已审核</b></div><div class="c " style="left:1710.00px;width:280px">2023-03-09 15:10:30</div><div class="c " style="left:2009.80px;width:280px">2023-03-09 15:10:38</div><div class="c opsc" style="left:2422.50px;width:600px"><span class="op g" style="margin-right:31.7px"><svg width="24" height="24" viewBox="0 0 24 24"><circle cx="11.6" cy="11.3" r="10.5" fill="none" stroke="currentColor" stroke-width="1.9"/><path d="M18.6 18.4 L23.7 23.4" stroke="currentColor" stroke-width="1.9"/></svg><span style="margin-left:13px;position:relative;top:0.5px">查看</span></span><span class="op b" style="margin-right:0px"><svg width="22" height="18" viewBox="0 0 22 18"><rect x="0" y="0" width="21.5" height="2.7" fill="currentColor"/><rect x="0" y="6.6" width="15" height="3.3" fill="currentColor"/><path d="M15.5 5.2 L21.5 8.3 L15.5 11.5 Z" fill="currentColor"/><rect x="0" y="14.1" width="21.5" height="3" fill="currentColor"/></svg><span style="margin-left:11.5px;position:relative;top:0.5px">导出</span></span></div></div>
</div>
<div class="t" style="left:3271px;top:1668px;font-size:40px;color:#bababa">激活 <span style="font-size:42.5px;margin-left:6px">Windows</span></div>
<div class="t" style="left:3271px;top:1719px;font-size:28px;color:#bababa"><span style="letter-spacing:1.1px">转到“设置”以激活</span> <span style="font-size:30px;margin-left:3px">Windows。</span></div>
</body></html>
